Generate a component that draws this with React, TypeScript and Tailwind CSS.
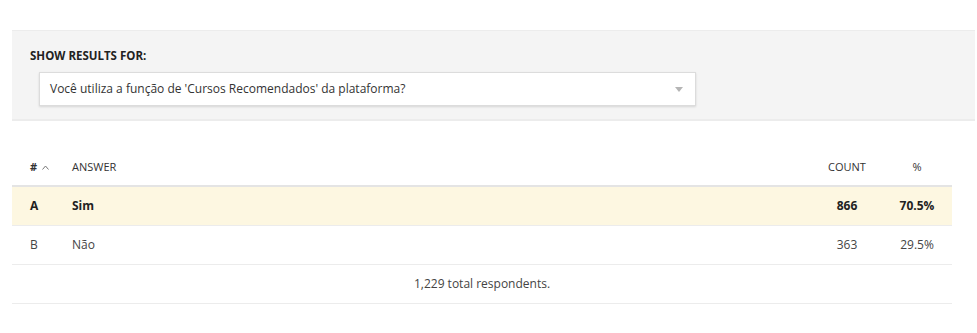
import React from "react";

const rows = [
  { id: "A", answer: "Sim", count: "866", pct: "70.5%", hl: true },
  { id: "B", answer: "Não", count: "363", pct: "29.5%", hl: false },
];

export default function App() {
  return (
    <div
      className="w-[977px] h-[333px] bg-white text-[#333] pt-[30px]"
      style={{ fontFamily: "'Open Sans', 'Liberation Sans', sans-serif" }}
    >
      <div className="ml-[12px] mr-[2px] h-[91px] bg-[#f4f4f4] border-t border-b-2 border-[#ececec] pt-[16px] pl-[18px]">
        <div className="text-[11.5px] font-bold leading-[17px] text-[#222]">SHOW RESULTS FOR:</div>
        <div className="mt-[8px] ml-[9px] w-[657px] h-[34px] bg-white border border-[#dcdcdc] shadow-[0_1px_2px_rgba(0,0,0,0.12)] flex items-center pl-[10px] pr-[12px]">
          <span className="flex-1 text-[12px] text-[#333]">
            Você utiliza a função de 'Cursos Recomendados' da plataforma?
          </span>
          <svg width="8" height="5" viewBox="0 0 8 5">
            <path d="M0 0 L8 0 L4 5 Z" fill="#b5b5b5" />
          </svg>
        </div>
      </div>

      <div className="ml-[12px] w-[940px] mt-[28px]">
        <div className="flex items-center h-[38px] border-b-2 border-[#e4e4e4] text-[11px] text-[#333]">
          <div className="w-[60px] pl-[18px] flex items-center gap-[5px]">
            <span className="font-bold">#</span>
            <svg width="7" height="5" viewBox="0 0 7 5">
              <path d="M0.5 4.5 L3.5 1 L6.5 4.5" fill="none" stroke="#777" strokeWidth="1" />
            </svg>
          </div>
          <div className="flex-1">ANSWER</div>
          <div className="w-[70px] text-center">COUNT</div>
          <div className="w-[70px] text-center">%</div>
        </div>
        {rows.map((r) => (
          <div
            key={r.id}
            className={`flex items-center h-[39px] border-b border-[#ececec] text-[12px] ${
              r.hl ? "bg-[#fdf7e1] font-bold text-[#222]" : "text-[#444]"
            }`}
          >
            <div className="w-[60px] pl-[18px]">{r.id}</div>
            <div className="flex-1">{r.answer}</div>
            <div className="w-[70px] text-center">{r.count}</div>
            <div className="w-[70px] text-center">{r.pct}</div>
          </div>
        ))}
        <div className="h-[39px] flex items-center justify-center border-b border-[#ececec] text-[12px] text-[#444]">
          1,229 total respondents.
        </div>
      </div>
    </div>
  );
}
